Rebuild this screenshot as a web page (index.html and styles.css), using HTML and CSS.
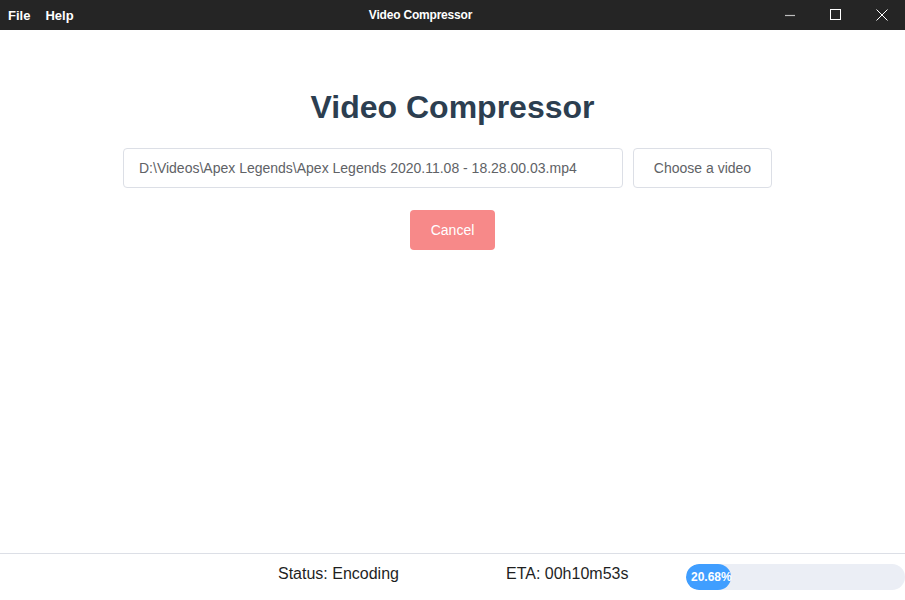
FILE: index.html
```html
<!DOCTYPE html>
<html lang="en">
<head>
  <meta charset="UTF-8" />
  <title>Video Compressor</title>
  <link rel="stylesheet" href="styles.css">
</head>
<body>
  <div class="titlebar">
    <div class="menu">
      <span>File</span>
      <span>Help</span>
    </div>
    <div class="title">Video Compressor</div>
    <div class="controls">
      <span class="ctl">
        <svg width="12" height="12" viewBox="0 0 12 12"><path d="M1 6.5h10" stroke="#bdbdbd" stroke-width="1.2"/></svg>
      </span>
      <span class="ctl">
        <svg width="12" height="12" viewBox="0 0 12 12"><rect x="0.5" y="0.5" width="10" height="10" fill="none" stroke="#fff" stroke-width="1"/></svg>
      </span>
      <span class="ctl">
        <svg width="12" height="12" viewBox="0 0 12 12"><path d="M0.5 0.5l11 11M11.5 0.5l-11 11" stroke="#fff" stroke-width="1"/></svg>
      </span>
    </div>
  </div>

  <div class="content">
    <h1>Video Compressor</h1>
    <div class="file-row">
      <div class="file-input">D:\Videos\Apex Legends\Apex Legends 2020.11.08 - 18.28.00.03.mp4</div>
      <button class="btn">Choose a video</button>
    </div>
    <button class="btn-cancel">Cancel</button>
  </div>

  <div class="footer">
    <span>Status: Encoding</span>
    <span>ETA: 00h10m53s</span>
    <div class="progress">
      <div class="progress-fill" style="width:20.68%">20.68%</div>
    </div>
  </div>
</body>
</html>
```

FILE: styles.css
```css
html, body { height: 100%; }
body {
  margin: 0; font-family: "Liberation Sans", Arial, sans-serif; background: #fff;
  display: flex; flex-direction: column; overflow: hidden;
}

.titlebar {
  height: 30px; background: #252525; color: #fff;
  display: flex; align-items: center; position: relative; flex-shrink: 0;
}
.menu { display: flex; padding-left: 8px; font-size: 13px; font-weight: bold; }
.menu span { margin-right: 15px; }
.title {
  position: absolute; left: 0; right: 0; text-align: center;
  font-size: 12px; font-weight: bold; pointer-events: none;
  padding-right: 64px; letter-spacing: -0.2px;
}
.controls { margin-left: auto; display: flex; height: 30px; }
.ctl { width: 46px; display: flex; align-items: center; justify-content: center; }

.content { flex: 1; display: flex; flex-direction: column; align-items: center; }
h1 {
  margin: 59px 0 0; font-size: 32px; line-height: 37px; color: #2c3e50; font-weight: bold;
}
.file-row { display: flex; gap: 10px; margin-top: 22px; padding-right: 10px; }
.file-input {
  width: 468px; height: 38px; border: 1px solid #dcdfe6; border-radius: 4px;
  padding: 0 15px; font-size: 14px; color: #606266; line-height: 38px;
}
.btn {
  width: 139px; height: 40px; border: 1px solid #dcdfe6; border-radius: 4px; background: #fff;
  font-family: inherit; font-size: 14px; color: #606266;
}
.btn-cancel {
  margin-top: 22px; width: 85px; height: 40px; border: none; border-radius: 4px;
  background: #f78989; color: #fff; font-family: inherit; font-size: 14px;
}

.footer {
  height: 46px; border-top: 1px solid #dcdfe6; flex-shrink: 0;
  display: grid; grid-template-columns: 228px 180px 1fr; align-items: center;
  padding-left: 278px; font-size: 16px; color: #1f1f1f;
}
.footer span { margin-top: -6px; }
.progress {
  height: 26px; background: #ebeef5; border-radius: 13px; overflow: hidden; margin-top: 0;
}
.progress-fill {
  height: 100%; background: #409eff; border-radius: 13px; color: #fff;
  font-size: 12px; font-weight: bold; line-height: 26px; padding-left: 5px; box-sizing: border-box;
  white-space: nowrap;
}
```
